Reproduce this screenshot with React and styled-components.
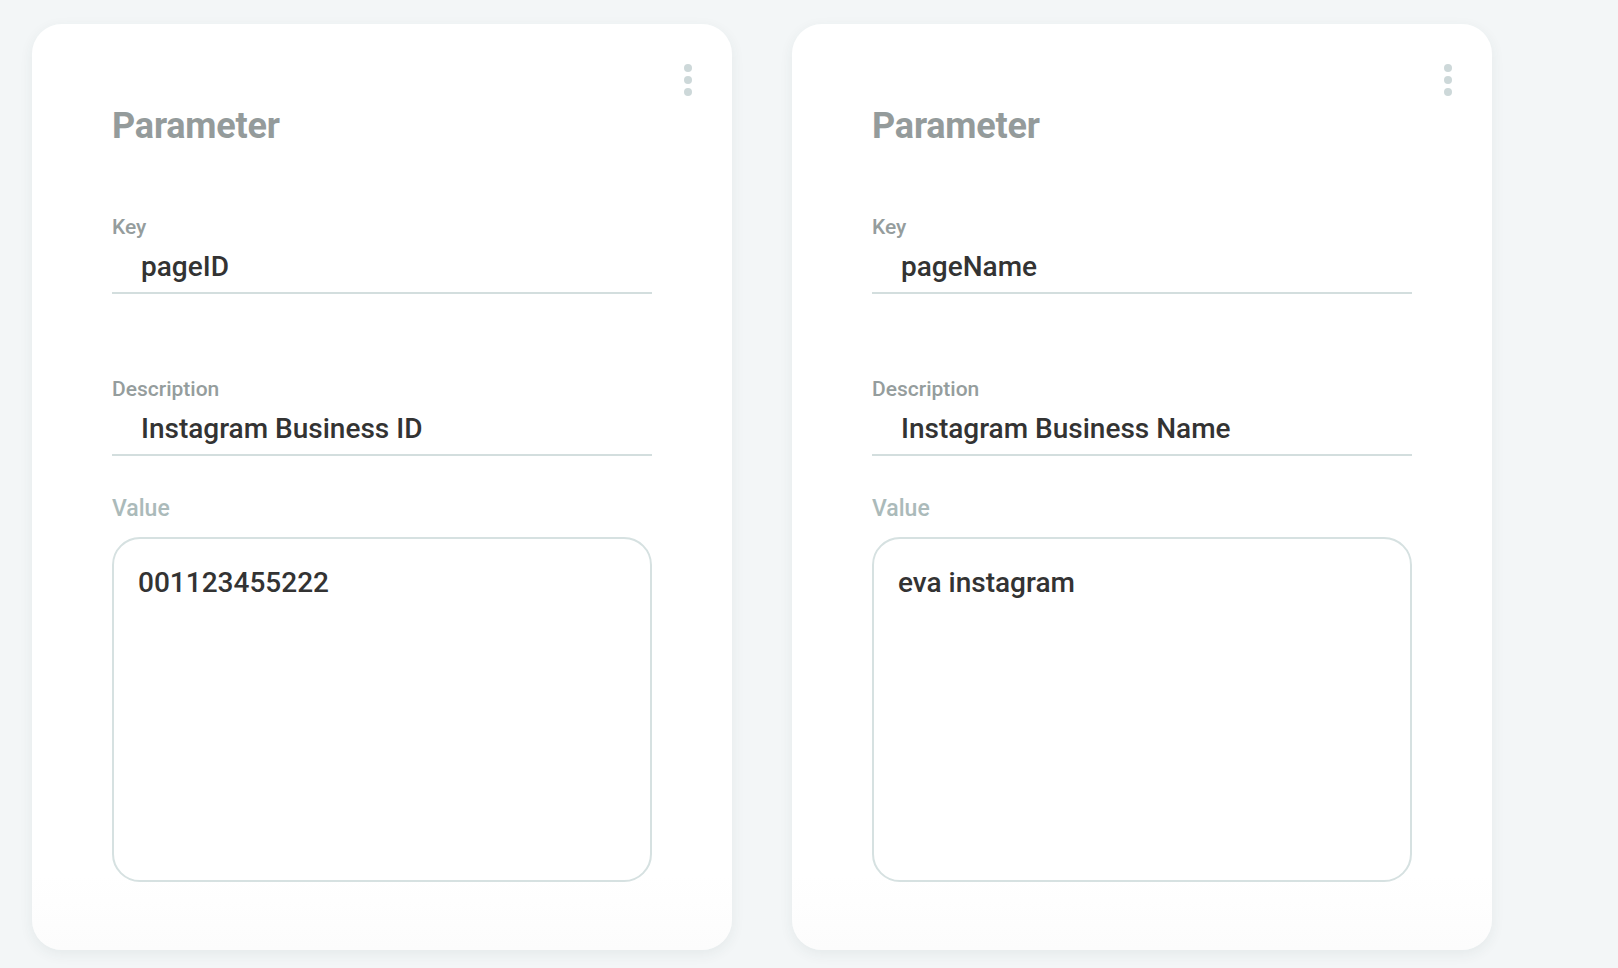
import React from "react";
import styled, { createGlobalStyle } from "styled-components";

const GlobalStyle = createGlobalStyle`
  html, body {
    margin: 0;
    padding: 0;
    background: #f3f6f7;
    font-family: Roboto, "Liberation Sans", Arial, sans-serif;
  }
  * { box-sizing: border-box; }
`;

const Page = styled.div`
  display: flex;
  gap: 60px;
  padding: 24px 32px;
  min-height: 968px;
  background: #f3f6f7;
`;

const Card = styled.section`
  position: relative;
  width: 700px;
  height: 926px;
  padding: 82px 80px 66px;
  background: linear-gradient(to bottom, #ffffff 92%, #fcfcfc 100%);
  border-radius: 30px;
  box-shadow: 0 4px 14px rgba(40, 70, 70, 0.07);
  display: flex;
  flex-direction: column;
`;

const MenuButton = styled.button`
  position: absolute;
  top: 38px;
  right: 38px;
  width: 12px;
  padding: 2px;
  border: 0;
  background: transparent;
  display: flex;
  flex-direction: column;
  align-items: center;
  gap: 4px;
  cursor: pointer;
`;

const Dot = styled.span`
  width: 8px;
  height: 8px;
  border-radius: 50%;
  background: #cdd8d9;
`;

const Title = styled.h2`
  margin: 0;
  font-size: 36px;
  line-height: 40px;
  font-weight: 700;
  letter-spacing: -0.2px;
  color: #949b9b;
`;

const Field = styled.div`
  display: flex;
  flex-direction: column;
  margin-top: ${(p) => p.$top}px;
`;

const Label = styled.label`
  font-size: ${(p) => (p.$light ? 23 : 21)}px;
  line-height: ${(p) => (p.$light ? 26 : 24)}px;
  font-weight: 500;
  color: ${(p) => (p.$light ? "#abbaba" : "#959d9d")};
`;

const LineInput = styled.input`
  margin-top: 10px;
  width: 100%;
  height: 45px;
  padding: 0 0 9px 29px;
  border: 0;
  border-bottom: 2px solid #d3dede;
  outline: none;
  background: transparent;
  font-family: Roboto, "Liberation Sans", Arial, sans-serif;
  font-size: 28px;
  line-height: 34px;
  font-weight: 500;
  color: #333333;
`;

const ValueBox = styled.textarea`
  margin-top: 15px;
  width: 100%;
  height: 345px;
  padding: 27px 24px;
  border: 2px solid #d6e1e1;
  border-radius: 28px;
  outline: none;
  resize: none;
  background: #ffffff;
  font-family: Roboto, "Liberation Sans", Arial, sans-serif;
  font-size: 28px;
  line-height: 34px;
  font-weight: 500;
  color: #333333;
`;

const params = [
  { key: "pageID", description: "Instagram Business ID", value: "001123455222" },
  { key: "pageName", description: "Instagram Business Name", value: "eva instagram" },
];

function ParameterCard({ data }) {
  return (
    <Card>
      <MenuButton aria-label="More options">
        <Dot />
        <Dot />
        <Dot />
      </MenuButton>
      <Title>Parameter</Title>
      <Field $top={69}>
        <Label>Key</Label>
        <LineInput defaultValue={data.key} />
      </Field>
      <Field $top={83}>
        <Label>Description</Label>
        <LineInput defaultValue={data.description} />
      </Field>
      <Field $top={40}>
        <Label $light>Value</Label>
        <ValueBox defaultValue={data.value} />
      </Field>
    </Card>
  );
}

export default function App() {
  return (
    <>
      <GlobalStyle />
      <Page>
        {params.map((p) => (
          <ParameterCard key={p.key} data={p} />
        ))}
      </Page>
    </>
  );
}
